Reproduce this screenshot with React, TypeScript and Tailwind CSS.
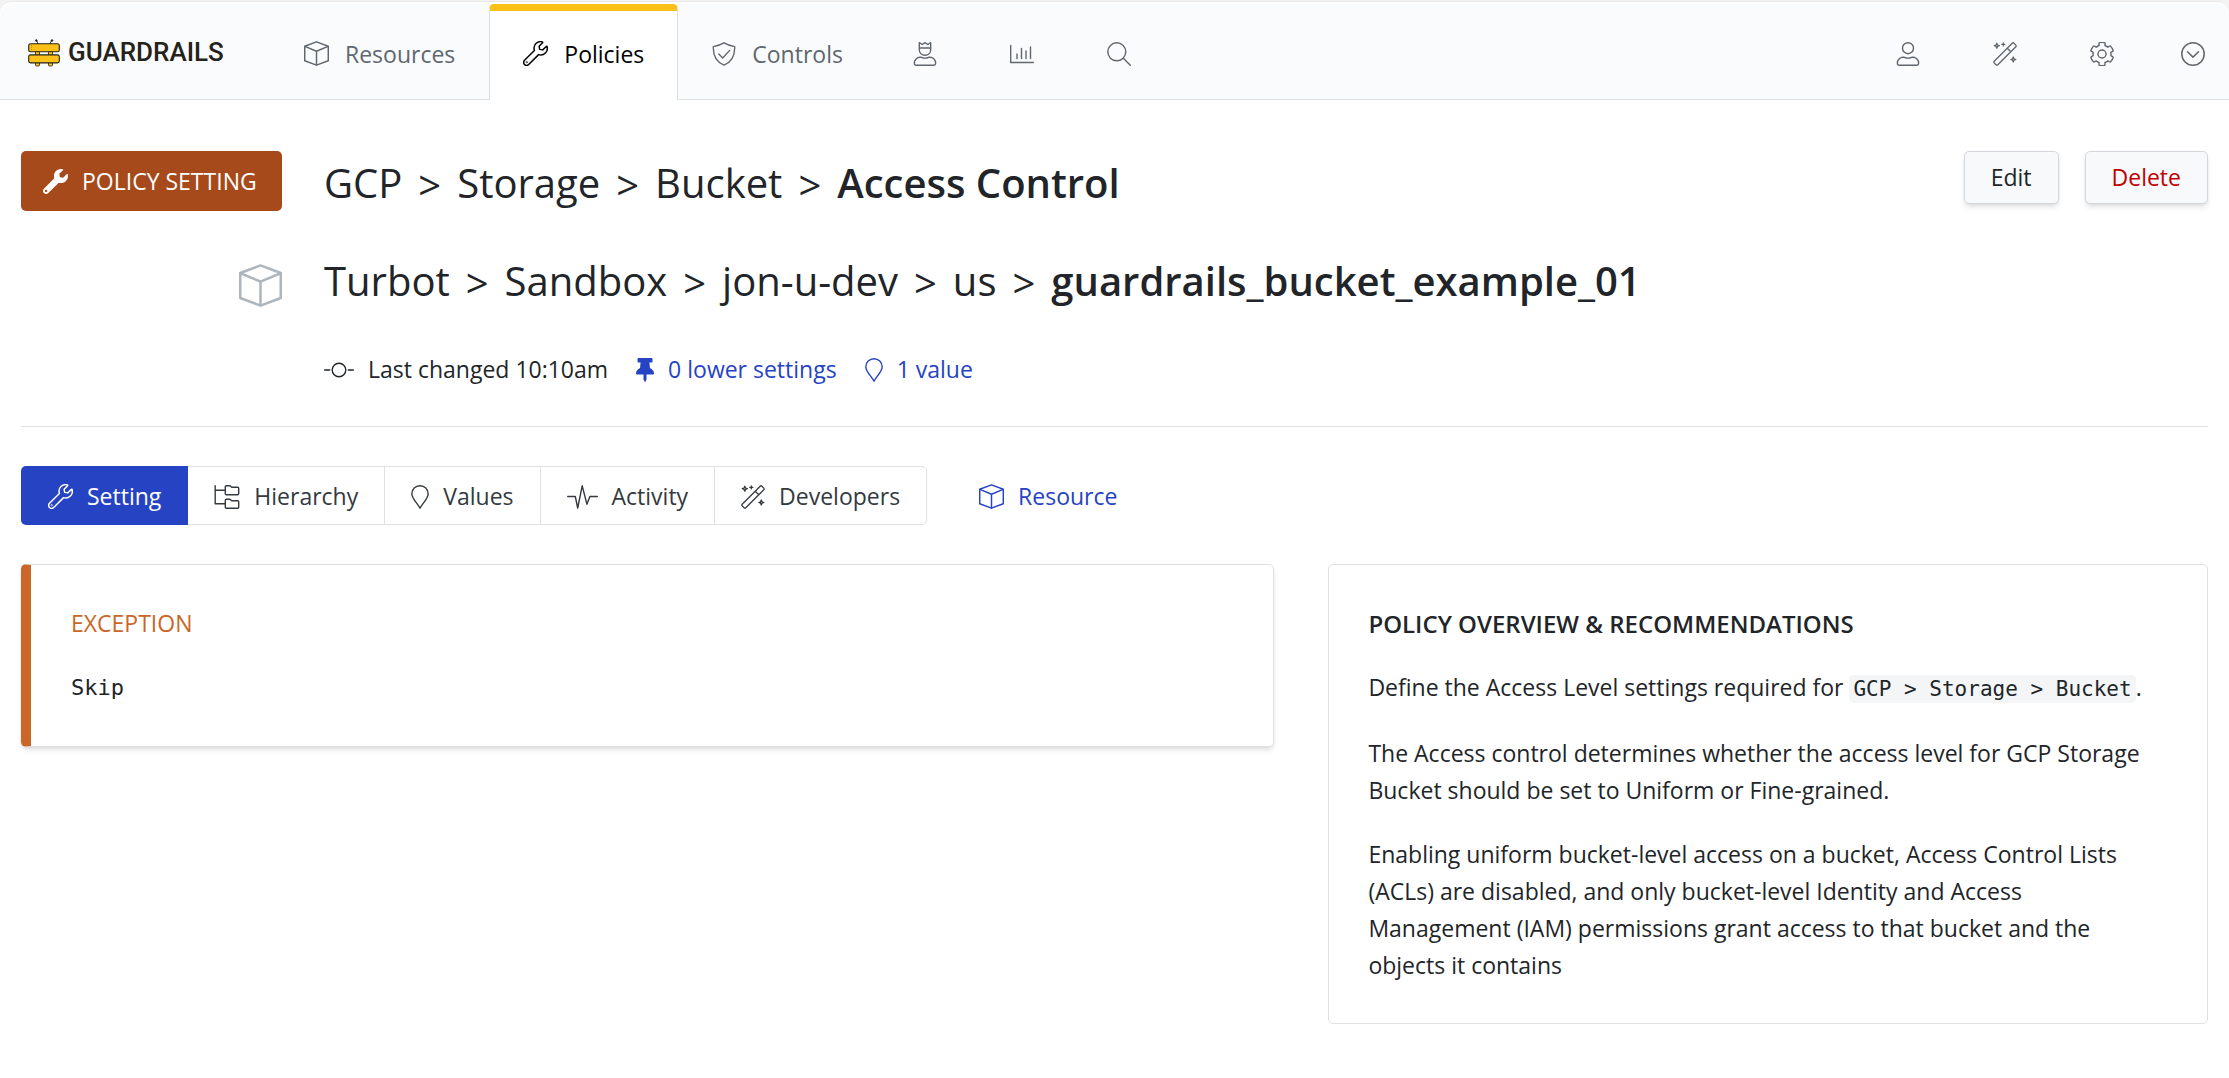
import React from 'react';
import { FaThumbtack, FaWrench } from 'react-icons/fa';

type IconProps = { className?: string };

const line = {
  fill: 'none',
  stroke: 'currentColor',
  strokeWidth: 1.4,
  strokeLinecap: 'round' as const,
  strokeLinejoin: 'round' as const,
  'aria-hidden': true,
};

function Cube({ className = 'size-[25px]' }: IconProps) {
  return (
    <svg viewBox="0 0 24 24" className={`shrink-0 ${className}`} {...line}>
      <path d="M12 .8 23.3 5v14L12 23.2.7 19V5z" />
      <path d="M.9 5.2 12 9.8l11.1-4.6M12 9.8V23" />
    </svg>
  );
}

function Wrench() {
  return (
    <svg viewBox="-14 -14 540 540" className="size-[25px] shrink-0" {...line} strokeWidth={32}>
      <path d="M507.73 109.1c-2.24-9.03-13.54-12.09-20.12-5.51l-74.36 74.36-67.88-11.31-11.31-67.88 74.36-74.36c6.62-6.62 3.43-17.9-5.66-20.16-47.38-11.74-99.55.91-136.58 37.93-39.64 39.64-50.55 97.1-34.05 147.2L18.74 402.76c-24.99 24.99-24.99 65.51 0 90.5 24.99 24.99 65.51 24.99 90.5 0l213.21-213.21c50.12 16.71 107.47 5.68 147.37-34.22 37.07-37.07 49.7-89.32 37.91-136.73z" />
      <circle cx="66" cy="446" r="6" />
    </svg>
  );
}

function Shield() {
  return (
    <svg viewBox="0 0 24 24" className="size-6 shrink-0" {...line}>
      <path d="M12 .8c3.2 1.9 6.700 3 10.700 3.800.3 8.400-1.900 15-10.700 18.600C3.200 19.600 1 13 1.300 4.600 5.300 3.800 8.800 2.700 12 .8z" />
      <path d="m6.800 12 3.900 4 7-7.600" />
    </svg>
  );
}

function UserBody() {
  return (
    <path d="M7 15.300h1.400c1.100.5 2.300.8 3.600.8s2.500-.3 3.600-.8H17c3.100 0 5.600 2.500 5.600 5.600v.7c0 .9-.8 1.700-1.700 1.700H3.100c-.9 0-1.700-.8-1.700-1.700v-.7c0-3.100 2.500-5.600 5.600-5.600z" />
  );
}

function User() {
  return (
    <svg viewBox="0 0 24 24" className="size-6 shrink-0" {...line}>
      <circle cx="12" cy="6.200" r="5.500" />
      <UserBody />
    </svg>
  );
}

function UserCrown() {
  return (
    <svg viewBox="0 0 24 24" className="size-6 shrink-0" {...line}>
      <path d="M6.300.7v7.100c0 3.200 2.500 5.500 5.700 5.500s5.700-2.300 5.700-5.500V.7l-2.900 1.800L12 .7 9.200 2.500zM6.300 6h11.400" />
      <UserBody />
    </svg>
  );
}

function Chart() {
  return (
    <svg viewBox="0 0 24 24" className="size-6 shrink-0" {...line}>
      <path d="M.7 3.500v17h22.600M7 12v4.500M11.500 6.500v10M16 9v7.500M20.500 5v11.500" />
    </svg>
  );
}

function Search() {
  return (
    <svg viewBox="0 0 24 24" className="size-6 shrink-0" {...line}>
      <circle cx="9.800" cy="9.800" r="9" />
      <path d="m16.300 16.300 7 7" />
    </svg>
  );
}

function Wand() {
  return (
    <svg viewBox="0 0 24 24" className="size-6 shrink-0" {...line} strokeWidth={1.3}>
      <path d="M1.200 19.200 19.200 1.200c.5-.5 1.200-.5 1.700 0l1.900 1.900c.5.5.5 1.200 0 1.700L4.800 22.800c-.5.5-1.200.5-1.700 0l-1.900-1.900c-.5-.5-.5-1.200 0-1.700zM14.200 6.200l3.600 3.600" />
      <path d="m3.800 1.200.7 1.800 1.800.7-1.800.7-.7 1.800-.7-1.800-1.800-.7 1.800-.7zM20.300 15l.7 1.800 1.800.7-1.800.7-.7 1.800-.7-1.800-1.800-.7 1.800-.7zM10.300.9v3M8.800 2.400h3" />
    </svg>
  );
}

function Gear() {
  return (
    <svg viewBox="0 0 512 512" className="size-6 shrink-0" {...line} strokeWidth={30}>
      <path d="M487.400 315.700l-42.600-24.600c4.300-23.200 4.300-47 0-70.200l42.600-24.600c4.900-2.800 7.100-8.600 5.500-14-11.100-35.600-30-67.800-54.700-94.600-3.800-4.100-10-5.100-14.800-2.300L380.800 110c-17.900-15.400-38.500-27.300-60.800-35.100V25.800c0-5.600-3.900-10.500-9.400-11.700-36.700-8.200-74.300-7.800-109.200 0-5.500 1.200-9.400 6.100-9.400 11.700V75c-22.200 7.900-42.800 19.800-60.800 35.100L88.700 85.500c-4.900-2.800-11-1.900-14.800 2.300-24.700 26.700-43.600 58.900-54.700 94.600-1.700 5.400.6 11.200 5.500 14L67.300 221c-4.300 23.200-4.300 47 0 70.200l-42.600 24.600c-4.900 2.800-7.100 8.600-5.500 14 11.100 35.600 30 67.800 54.700 94.600 3.800 4.100 10 5.100 14.800 2.300l42.600-24.600c17.900 15.400 38.500 27.300 60.800 35.100v49.200c0 5.600 3.900 10.500 9.400 11.700 36.700 8.200 74.300 7.800 109.200 0 5.500-1.200 9.400-6.100 9.400-11.700v-49.200c22.200-7.900 42.800-19.800 60.800-35.100l42.600 24.600c4.900 2.800 11 1.900 14.800-2.300 24.700-26.700 43.600-58.900 54.700-94.600 1.500-5.500-.7-11.300-5.600-14.100z" />
      <circle cx="256" cy="256" r="86" />
    </svg>
  );
}

function ChevronCircle() {
  return (
    <svg viewBox="0 0 24 24" className="size-6 shrink-0" {...line} strokeWidth={1.5}>
      <circle cx="12" cy="12" r="11.200" />
      <path d="m6.500 9.800 5.500 5.300 5.500-5.300" />
    </svg>
  );
}

function Pin() {
  return (
    <svg viewBox="0 0 18 24" className="h-6 w-[18px] shrink-0" {...line}>
      <path d="M9 23.200C7.400 19.800.8 13.200.8 8.900a8.200 8.200 0 0 1 16.400 0c0 4.300-6.600 10.900-8.200 14.300z" />
    </svg>
  );
}

function Commit() {
  return (
    <svg viewBox="0 0 30 24" className="h-6 w-[30px] shrink-0" {...line}>
      <path d="M.7 12h5M24.300 12h5" />
      <circle cx="15" cy="12" r="6.800" />
    </svg>
  );
}

function FolderTree() {
  return (
    <svg viewBox="0 0 26 24" className="h-6 w-[26px] shrink-0" {...line}>
      <path d="M1.200.7v18.100h9.600M1.200 5.300h9.600" />
      <path d="M11.300 1.800c0-.6.4-1 1-1h3.700l1.700 1.500h6c.6 0 1 .4 1 1v5.500c0 .6-.4 1-1 1H12.300c-.6 0-1-.4-1-1zM11.300 15.300c0-.6.4-1 1-1h3.700l1.700 1.500h6c.6 0 1 .4 1 1v5.500c0 .6-.4 1-1 1H12.300c-.6 0-1-.4-1-1z" />
    </svg>
  );
}

function Pulse() {
  return (
    <svg viewBox="0 0 31 24" className="h-6 w-[31px] shrink-0" {...line}>
      <path d="M.7 11.500h7.600l2.400 11.500L15.200.8l4.700 18.400 3-7.700h7.400" />
    </svg>
  );
}

function Logo() {
  return (
    <svg viewBox="0 0 32 28" className="h-7 w-8 shrink-0" fill="#fcc119" stroke="#24221a" aria-hidden>
      <path d="M9.500 5V3.500L8.500 1.500M22.500 5V3.500L23.700 1.500" fill="none" />
      <circle cx="8.300" cy="1.500" r=".8" fill="#24221a" />
      <circle cx="24" cy="1.500" r=".8" fill="#24221a" />
      <path
        d="M7.500 12.500h4v4h-4zM20.500 12.500h4v4h-4zM7.500 23.500h4v2.800c0 .4-.3.700-.7.700H8.200c-.4 0-.7-.3-.7-.7zM20.500 23.500h4v2.800c0 .4-.3.700-.7.700h-2.600c-.4 0-.7-.3-.7-.7z"
        strokeWidth=".8"
      />
      <rect x=".7" y="4.700" width="30.600" height="8" rx="1.800" strokeWidth="1.100" />
      <rect x=".7" y="15.900" width="30.600" height="8" rx="1.800" strokeWidth="1.100" />
      <path d="M3.500 6v5.500" stroke="#b98a10" strokeDasharray="1 1" />
    </svg>
  );
}

function NavLink({ icon, children }: { icon: React.ReactNode; children: React.ReactNode }) {
  return (
    <a href="#" className="flex items-center gap-4 border-b border-[#dcdfe3] px-[34px] pt-1">
      {icon}
      <span className="pt-0.5">{children}</span>
    </a>
  );
}

function NavIcon({ label, children }: { label: string; children: React.ReactNode }) {
  return (
    <button type="button" aria-label={label} className="flex w-[97px] items-center justify-center border-b border-[#dcdfe3] pt-1">
      {children}
    </button>
  );
}

function Crumbs({ parents, current }: { parents: string[]; current: string }) {
  return (
    <>
      {parents.map((p) => (
        <React.Fragment key={p}>
          <span>{p}</span>
          <span className="pt-1">&gt;</span>
        </React.Fragment>
      ))}
      <span className="font-semibold">{current}</span>
    </>
  );
}

const tabs = [
  { label: 'Hierarchy', icon: <FolderTree /> },
  { label: 'Values', icon: <Pin /> },
  { label: 'Activity', icon: <Pulse /> },
  { label: 'Developers', icon: <Wand /> },
];

export default function App() {
  return (
    <div className="min-h-screen bg-[#f3f3f3] pt-px font-['Open_Sans','Noto_Sans',sans-serif] text-[23px] leading-[37px] text-[#212529]">
      <div className="min-h-screen rounded-t-xl border-t border-[#e8e8e8] bg-white pt-0.5">
        <header className="flex h-24 rounded-t-xl bg-[#fafbfd] text-[#5f676f]">
          <a
            href="#"
            className="flex w-[270px] items-center gap-2 border-b border-[#dcdfe3] pt-0.5 pl-7 font-['Roboto',sans-serif] text-[26px] font-medium text-[#24221a]"
          >
            <Logo />
            GUARDRAILS
          </a>
          <nav className="flex">
            <NavLink icon={<Cube />}>Resources</NavLink>
            <a
              href="#"
              aria-current="page"
              className="flex items-center gap-4 rounded-t-[5px] border-x border-t-[7px] border-x-[#dcdfe3] border-t-[#fcc119] bg-white px-[33px] pb-1 text-black"
            >
              <Wrench />
              <span className="pt-0.5">Policies</span>
            </a>
            <NavLink icon={<Shield />}>Controls</NavLink>
            <NavIcon label="Administration"><UserCrown /></NavIcon>
            <NavIcon label="Reports"><Chart /></NavIcon>
            <NavIcon label="Search"><Search /></NavIcon>
          </nav>
          <div className="flex flex-1 justify-end border-b border-[#dcdfe3]">
            <div className="-mb-px flex pr-3">
              <NavIcon label="Profile"><User /></NavIcon>
              <NavIcon label="Developer tools"><Wand /></NavIcon>
              <NavIcon label="Settings"><Gear /></NavIcon>
              <button type="button" aria-label="More" className="flex w-[67px] items-center justify-end border-b border-[#dcdfe3] pt-1 pr-3">
                <ChevronCircle />
              </button>
            </div>
          </div>
        </header>

        <main className="px-[21px] pt-[51px]">
          <section className="grid grid-cols-[261px_1fr_auto] items-start gap-x-[42px] border-b border-[#e0e2e4] pb-[38px]">
            <div className="flex h-[60px] items-center gap-3.5 rounded-[5px] bg-[#a74a1b] px-[22px] text-white">
              <FaWrench className="size-[25px] shrink-0" aria-hidden />
              <span className="whitespace-nowrap">POLICY SETTING</span>
            </div>
            <h1 className="flex h-[62px] items-center gap-4 text-[40px]">
              <Crumbs parents={['GCP', 'Storage', 'Bucket']} current="Access Control" />
            </h1>
            <div className="flex gap-[26px]">
              <button type="button" className="h-[53px] rounded-[5px] border border-[#d3d7dc] bg-[#f8f9fb] px-[26px] shadow-md shadow-black/10">
                Edit
              </button>
              <button type="button" className="h-[53px] rounded-[5px] border border-[#d3d7dc] bg-[#f8f9fb] px-[26px] text-[#c00000] shadow-md shadow-black/10">
                Delete
              </button>
            </div>

            <div className="mt-[51px] flex justify-end text-[#adb5bd]">
              <Cube className="size-[43px]" />
            </div>
            <h2 className="col-span-2 mt-9 flex h-[62px] items-center gap-4 text-[40px]">
              <Crumbs parents={['Turbot', 'Sandbox', 'jon-u-dev', 'us']} current="guardrails_bucket_example_01" />
            </h2>

            <div className="col-start-2 mt-10 flex items-center gap-7">
              <span className="flex items-center gap-3.5">
                <Commit />
                Last changed 10:10am
              </span>
              <a href="#" className="flex items-center gap-3.5 text-[#2643c4]">
                <FaThumbtack className="h-6 w-[18px]" aria-hidden />
                0 lower settings
              </a>
              <a href="#" className="flex items-center gap-3.5 text-[#2643c4]">
                <Pin />
                1 value
              </a>
            </div>
          </section>

          <nav className="mt-[39px] flex h-[59px] text-[#343a40]">
            <a href="#" aria-current="page" className="flex items-center gap-3.5 rounded-l-[5px] bg-[#2643c4] px-[27px] pt-0.5 text-white">
              <Wrench />
              Setting
            </a>
            <div className="flex divide-x divide-[#dee0e3] rounded-r-[5px] border border-l-0 border-[#dee0e3]">
              {tabs.map((t) => (
                <a key={t.label} href="#" className="flex items-center gap-3.5 px-[26px] pt-0.5">
                  {t.icon}
                  {t.label}
                </a>
              ))}
            </div>
            <a href="#" className="ml-[52px] flex items-center gap-3.5 pt-0.5 text-[#2643c4]">
              <Cube />
              Resource
            </a>
          </nav>

          <div className="mt-[39px] grid grid-cols-[57fr_40fr] items-start gap-[54px]">
            <section className="rounded-[5px] border border-l-[10px] border-[#dee0e3] border-l-[#ca6728] p-10 shadow-md shadow-black/10">
              <h3 className="text-[#ca6728]">EXCEPTION</h3>
              <p className="mt-[27px] font-['DejaVu_Sans_Mono',monospace] text-[22px]">Skip</p>
            </section>

            <section className="rounded-[5px] border border-[#dee0e3] px-[39px] pt-10 pb-[39px]">
              <h3 className="text-2xl leading-[37px] font-semibold">POLICY OVERVIEW &amp; RECOMMENDATIONS</h3>
              <p className="mt-[27px]">
                Define the Access Level settings required for{' '}
                <code className="rounded-[5px] bg-[#f4f5f7] px-1 py-0.5 font-['DejaVu_Sans_Mono',monospace] text-[21px] leading-none">
                  GCP &gt; Storage &gt; Bucket
                </code>
                .
              </p>
              <p className="mt-[29px]">
                The Access control determines whether the access level for GCP Storage Bucket should be set to Uniform or
                Fine-grained.
              </p>
              <p className="mt-[27px]">
                Enabling uniform bucket-level access on a bucket, Access Control Lists (ACLs) are disabled, and only
                bucket-level Identity and Access Management (IAM) permissions grant access to that bucket and the objects
                it contains
              </p>
            </section>
          </div>
        </main>
      </div>
    </div>
  );
}
